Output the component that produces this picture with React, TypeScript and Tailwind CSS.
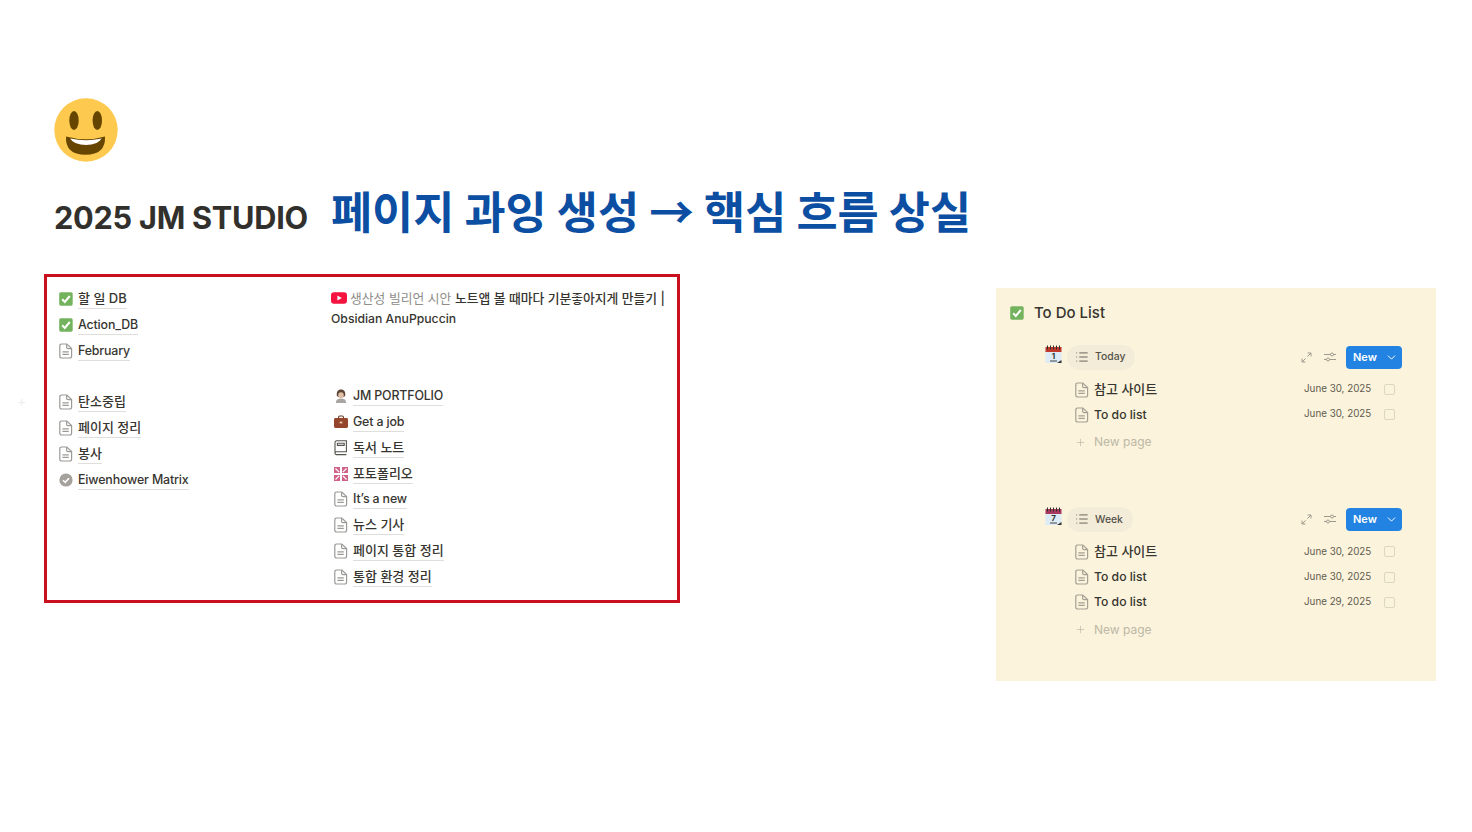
import React from 'react';
import { Plus, List, ChevronDown } from 'lucide-react';

const DocIcon = ({ className = 'text-[#9b9a97]' }: { className?: string }) => (
  <svg width="14" height="16" viewBox="0 0 14 16" fill="none" stroke="currentColor" strokeWidth="1.2" className={className}>
    <path d="M2.6 1h5.2L12.6 5.6v7.6a1.8 1.8 0 0 1-1.8 1.8H2.6A1.8 1.8 0 0 1 .8 13.2V2.8A1.8 1.8 0 0 1 2.6 1z" />
    <path d="M7.6 1.2v3a1.4 1.4 0 0 0 1.4 1.4h3.4" />
    <path d="M3.4 8.8h6.4M3.4 11.4h6.4" />
  </svg>
);

const CheckIcon = () => (
  <svg width="14" height="14" viewBox="0 0 14 14">
    <rect width="13.5" height="13.5" x="0.2" y="0.2" rx="1.6" fill="#74b35d" />
    <path d="M3.2 7.2l2.6 2.8 5-6" fill="none" stroke="#fff" strokeWidth="2" />
  </svg>
);

const GrayCheck = () => (
  <svg width="14" height="14" viewBox="0 0 14 14">
    <circle cx="7" cy="7" r="6.6" fill="#a5a19c" />
    <path d="M4 7.2l2.2 2.2 3.8-4.2" fill="none" stroke="#fff" strokeWidth="1.6" />
  </svg>
);

const Youtube = () => (
  <svg width="16" height="12" viewBox="0 0 16 12">
    <rect width="16" height="11.4" y="0.3" rx="3" fill="#f4123f" />
    <path d="M6.4 3.4v5.2L10.8 6z" fill="#fff" />
  </svg>
);

const Portrait = () => (
  <svg width="14" height="14" viewBox="0 0 14 14">
    <path d="M1.8 14c0-3.2 2-4.6 5.2-4.6s5.2 1.4 5.2 4.6z" fill="#a9a6a2" />
    <path d="M2.8 6.4C2.4 2.2 4.6.6 7 .6s4.6 1.6 4.2 5.8L10 8H4z" fill="#5d4436" />
    <ellipse cx="7" cy="6.2" rx="2.8" ry="3" fill="#dfbfa8" />
  </svg>
);

const Briefcase = () => (
  <svg width="14" height="14" viewBox="0 0 14 14">
    <path d="M4.6 3.4V2a1 1 0 0 1 1-1h2.8a1 1 0 0 1 1 1v1.4" fill="none" stroke="#6d3a26" strokeWidth="1.1" />
    <rect y="3" width="14" height="10" rx="1.4" fill="#94452c" />
    <rect x="5.6" y="6.6" width="2.8" height="1.8" fill="#e9c9a8" />
  </svg>
);

const Book = () => (
  <svg width="14" height="16" viewBox="0 0 14 16" fill="none" stroke="#55534e" strokeWidth="1.1">
    <path d="M1 13.2V2.4A1.6 1.6 0 0 1 2.6.8h9.8v11H2.4A1.4 1.4 0 0 0 1 13.2a1.4 1.4 0 0 0 1.4 1.4h10" />
    <path d="M3.4 3.2h6.8v2.2H3.4z" />
  </svg>
);

const Expand = () => (
  <svg width="14" height="14" viewBox="0 0 14 14">
    <rect width="14" height="14" fill="#d0628a" />
    <path d="M0 7h14M7 0v14" stroke="#fff" strokeWidth="2" />
    <path d="M1.5 1.5l3.6 3.6M12.5 1.5L8.9 5.1M1.5 12.5l3.6-3.6M12.5 12.5L8.9 8.9" stroke="#fff" strokeWidth="1.2" />
  </svg>
);

const Calendar = ({ day, top }: { day: string; top: string }) => (
  <svg width="17" height="19" viewBox="0 0 17 19" className="shrink-0">
    <rect x="0.5" y="2" width="16" height="16" fill="#dcebf5" />
    <rect x="0.5" y="2" width="16" height="5" fill={top} />
    <path d="M2.5 0.5v4M5.5 0.5v4M8.5 0.5v4M11.5 0.5v4M14.5 0.5v4" stroke="#33302c" strokeWidth="1" />
    <text x="8.5" y="13.5" textAnchor="middle" fontSize="8" fontWeight="700" fill="#333" fontFamily="Inter, sans-serif">{day}</text>
    <path d="M5 16h7" stroke="#444" strokeWidth="1" />
    <path d="M12 18l4.5-3v3z" fill="#33302c" />
  </svg>
);

const Smiley = () => (
  <svg width="64" height="64" viewBox="0 0 64 64">
    <circle cx="32" cy="32" r="31.7" fill="#fdc94f" />
    <ellipse cx="20" cy="22.5" rx="4.7" ry="9.5" fill="#664500" />
    <ellipse cx="43.3" cy="22.5" rx="4.7" ry="9.5" fill="#664500" />
    <path d="M12 38.5Q32 44 51 38.5Q52 56.7 31.5 56.7Q11 56.7 12 38.5z" fill="#664500" />
    <path d="M16 40.5Q32 44 47.5 40.5Q44 47 32 47Q20 47 16 40.5z" fill="#fff" />
  </svg>
);

const LinkRow = ({ icon, label, tall }: { icon: React.ReactNode; label: string; tall?: boolean }) => (
  <div className={`flex items-center ${tall ? 'h-[25.86px]' : 'h-[26px]'}`}>
    <div className="w-[19px] shrink-0 flex items-center">{icon}</div>
    <span className={`font-medium leading-[19px] text-[#37352f] border-b border-[#dfdedb] ${/^[A-Z][A-Za-z_’ ]+$/.test(label) ? 'text-[12.4px] tracking-[-0.15px]' : 'text-[13px]'}`}>
      {label}
    </span>
  </div>
);

const TaskRow = ({ label, date }: { label: string; date: string }) => (
  <div className="flex items-center h-[25.2px] pl-[30px]">
    <DocIcon className="text-[#a5a094]" />
    <span className={`ml-[5px] flex-1 font-medium text-[#37352f] ${label.startsWith('To') ? 'text-[12.2px]' : 'text-[13px]'}`}>{label}</span>
    <span className="text-[9.8px] text-[#5f5b50] w-[67px] whitespace-nowrap">{date}</span>
    <span className="ml-[13px] mr-[7px] w-[11px] h-[11px] rounded-[2px] border border-[#dcd6c4]" />
  </div>
);

const TaskGroup = ({ title, day, top, rows }: { title: string; day: string; top: string; rows: { label: string; date: string }[] }) => (
  <section className="w-[357px]">
    <div className="flex items-center h-[26px]">
      <div className="-mt-[5px]">
        <Calendar day={day} top={top} />
      </div>
      <div className="ml-[5px] h-[25px] pl-[8px] pr-[10px] rounded-full bg-[#f3ecd8] flex items-center gap-[6px] text-[10.4px] font-medium text-[#55524a]">
        <List size={14} strokeWidth={1.5} />
        {title}
      </div>
      <div className="ml-auto flex items-center text-[#9d998c]">
        <svg width="11" height="11" viewBox="0 0 11 11" fill="none" stroke="currentColor" strokeWidth="1">
          <path d="M1 10l3.6-3.6M10 1L6.4 4.6M6.6 1H10v3.4M1 6.6V10h3.4" />
        </svg>
        <svg width="12" height="10" viewBox="0 0 12 10" fill="none" stroke="currentColor" strokeWidth="1" className="ml-[12px]">
          <path d="M0 2.5h12M0 7.5h12" />
          <circle cx="8" cy="2.5" r="1.5" fill="#fbf3db" />
          <circle cx="4" cy="7.5" r="1.5" fill="#fbf3db" />
        </svg>
        <div className="ml-[10px] w-[56px] h-[23px] rounded-[4px] bg-[#2383e2] flex items-center text-white text-[11px] font-semibold pl-[7px]">
          New
          <ChevronDown size={13} strokeWidth={1.8} className="ml-auto mr-[4px]" />
        </div>
      </div>
    </div>
    <div className="mt-[7px]">
      {rows.map((r, i) => (
        <TaskRow key={i} {...r} />
      ))}
    </div>
    <div className="flex items-center h-[28px] mt-[1px] pl-[30px] text-[#bdb8a8] text-[12px]">
      <Plus size={11} strokeWidth={1.5} />
      <span className="ml-[8px]">New page</span>
    </div>
  </section>
);

export default function App() {
  return (
    <div className="relative w-[1472px] h-[832px] bg-white overflow-hidden pl-[54px] pt-[98px] font-['Inter','Noto_Sans_CJK_KR',sans-serif]">
      <span className="absolute left-[17px] top-[390px] text-[14px] text-[#ececec]">+</span>
      <Smiley />
      <div className="flex items-center mt-[21px] h-[60px]">
        <h1 className="text-[30.7px] font-bold text-[#32302c] tracking-[-0.25px] mt-[10px]">2025 JM STUDIO</h1>
        <p className="ml-[23px] text-[44.7px] font-bold text-[#0b4ea2] font-['Noto_Sans_CJK_KR',sans-serif] leading-none -mt-[6px]">
          페이지 과잉 생성 → 핵심 흐름 상실
        </p>
      </div>
      <div className="flex items-start -ml-[10px] mt-[31px]">
        <div className="w-[636px] h-[329px] border-[3px] border-[#c8101e] pl-[12px] pt-[9px] flex">
          <div className="w-[272px]">
            <LinkRow icon={<CheckIcon />} label="할 일 DB" />
            <LinkRow icon={<CheckIcon />} label="Action_DB" />
            <LinkRow icon={<DocIcon />} label="February" />
            <div className="mt-[25px]">
              <LinkRow icon={<DocIcon />} label="탄소중립" />
              <LinkRow icon={<DocIcon />} label="페이지 정리" />
              <LinkRow icon={<DocIcon />} label="봉사" />
              <LinkRow icon={<GrayCheck />} label="Eiwenhower Matrix" />
            </div>
          </div>
          <div className="flex-1">
            <p className="mt-[3px] text-[12.8px] font-medium leading-[20px] text-[#37352f]">
              <span className="inline-block align-[-1px] mr-[3px]"><Youtube /></span>
              <span className="text-[#8f8d89] font-normal">생산성 빌리언 시안 </span>
              노트앱 볼 때마다 기분좋아지게 만들기 | <span className="text-[12.2px]">Obsidian AnuPpuccin</span>
            </p>
            <div className="mt-[54px] pl-[3px]">
              <LinkRow tall icon={<Portrait />} label="JM PORTFOLIO" />
              <LinkRow tall icon={<Briefcase />} label="Get a job" />
              <LinkRow tall icon={<Book />} label="독서 노트" />
              <LinkRow tall icon={<Expand />} label="포토폴리오" />
              <LinkRow tall icon={<DocIcon />} label="It’s a new" />
              <LinkRow tall icon={<DocIcon />} label="뉴스 기사" />
              <LinkRow tall icon={<DocIcon />} label="페이지 통합 정리" />
              <LinkRow tall icon={<DocIcon />} label="통합 환경 정리" />
            </div>
          </div>
        </div>
        <div className="ml-[316px] mt-[14px] w-[440px] h-[393px] bg-[#fbf3db] pl-[14px] pt-[15px]">
          <div className="flex items-center h-[20px] gap-[10px]">
            <CheckIcon />
            <span className="text-[15px] font-medium text-[#37352f]">To Do List</span>
          </div>
          <div className="ml-[35px] mt-[21px]">
            <TaskGroup
              title="Today"
              day="1"
              top="#c0392b"
              rows={[
                { label: '참고 사이트', date: 'June 30, 2025' },
                { label: 'To do list', date: 'June 30, 2025' },
              ]}
            />
            <div className="mt-[50px]">
              <TaskGroup
                title="Week"
                day="7"
                top="#a83a5f"
                rows={[
                  { label: '참고 사이트', date: 'June 30, 2025' },
                  { label: 'To do list', date: 'June 30, 2025' },
                  { label: 'To do list', date: 'June 29, 2025' },
                ]}
              />
            </div>
          </div>
        </div>
      </div>
    </div>
  );
}
